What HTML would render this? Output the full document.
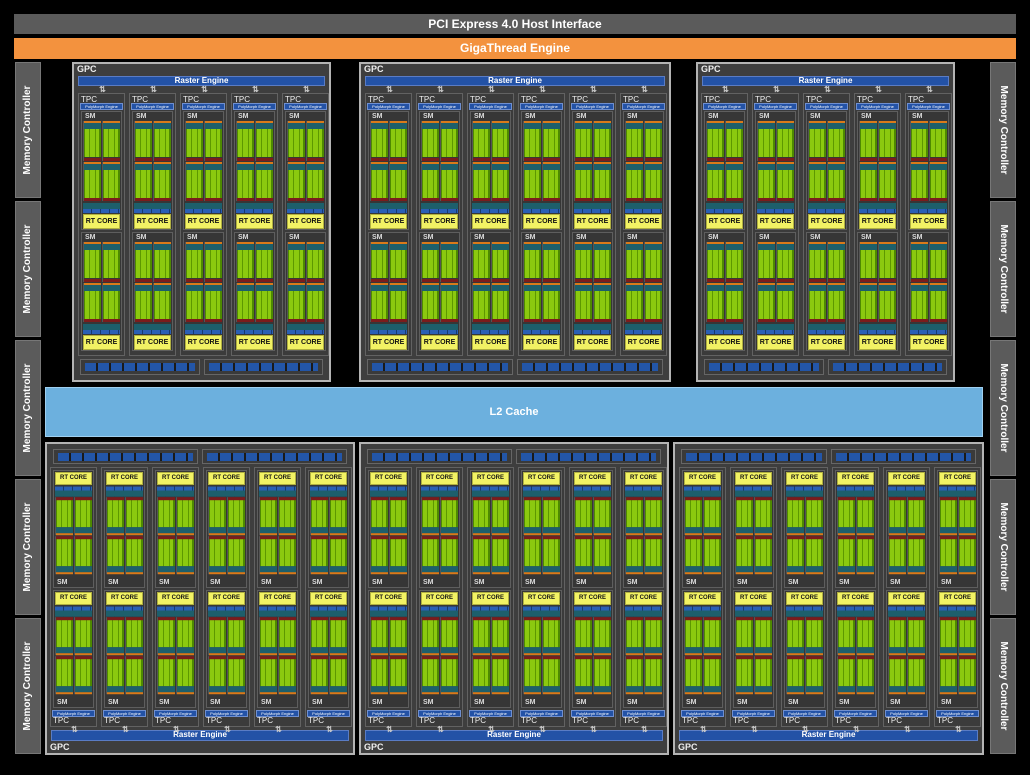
<!DOCTYPE html>
<html><head><meta charset="utf-8"><style>
*{box-sizing:border-box;margin:0;padding:0}
body{width:1030px;height:775px;background:#000;position:relative;overflow:hidden;font-family:"Liberation Sans",sans-serif;font-weight:bold;color:#fff}
.a{position:absolute}
#pci{left:14px;top:14px;width:1002px;height:20px;background:#5b5b5b;font-size:12px;text-align:center;line-height:20px}
#giga{left:14px;top:38px;width:1002px;height:21px;background:#f3923e;font-size:12px;text-align:center;line-height:21px}
.mc{width:26px;height:136px;background:#5b5b5b;border:1px solid #777}
.mc span{position:absolute;left:50%;top:50%;width:136px;text-align:center;font-size:10px;line-height:12px;transform:translate(-50%,-50%) rotate(-90deg);white-space:nowrap}
.mc.mr span{transform:translate(-50%,-50%) rotate(90deg)}
#l2{left:45px;top:387px;width:938px;height:50px;background:#6cb0de;border:1px solid #9fd0f0;font-size:11px;text-align:center;line-height:48px}
.g{position:absolute;border:2px solid #b4b4b4;background:#3e3e3e}
.g>h5{position:absolute;left:3px;font-size:9px;color:#eee;font-weight:bold}
.g .re{position:absolute;left:4px;right:4px;height:10px;background:#2352a6;border:1px solid #5a7cc4;font-size:8px;line-height:8px;text-align:center}
.g .bb{position:absolute;left:6px;right:6px;height:16px;display:flex;gap:4px}
.g .bb div{flex:1;border:1px solid #666;background:#3a3a3a;padding:3px 4px;background-clip:padding-box}
.g .bb div::after{content:"";display:block;height:8px;background:repeating-linear-gradient(90deg,#2356a8 0 11px,#1a1a1a 11px 13px)}
.t{position:absolute;width:47px;background:#3b3b3b;border:1px solid #626262}
.t p{position:absolute;left:2px;font-size:8px;font-weight:normal;color:#eee;line-height:8px}
.t s{position:absolute;left:1px;right:1px;height:7px;background:#2352a6;border:1px solid #6f8fd0;font-size:4px;line-height:5px;text-align:center;text-decoration:none;white-space:nowrap;overflow:hidden;font-weight:normal}
.t .ar{position:absolute;left:14px;width:18px;font-size:8px;line-height:6px;color:#ccc;text-align:center;letter-spacing:-1px}
.s{position:absolute;left:2px;width:41px;height:119px;background:#363636;border:1px solid #5e5e5e;display:flex;flex-direction:column;padding:0 1px}
.s b{height:9px;font-size:7px;line-height:9px;color:#ddd;padding-left:2px}
.r{display:flex;gap:1px;height:40px;margin-bottom:1px}
.r i{flex:1;background:
linear-gradient(#d97a1a,#d97a1a) 0 0/100% 2px no-repeat,
linear-gradient(#1d5f6b,#1d5f6b) 0 2px/100% 6px no-repeat,
linear-gradient(#7b1c1c,#7b1c1c) 0 100%/100% 3px no-repeat,
linear-gradient(90deg,#4e8a00 0 1px,#8bc90f 1px 5px,#5d9800 5px 6px,#8bc90f 6px 11px,#5d9800 11px 12px,#8bc90f 12px 15px,#4e8a00 15px) 0 8px/100% 28px no-repeat;border-left:1px solid #555}
.s em{display:block;height:10px;margin-top:1px;background:linear-gradient(#1d5f6b 0 6px,transparent 6px),repeating-linear-gradient(90deg,#2a5fb5 0 8px,#173a70 8px 9px)}
.s u{display:block;height:15px;margin-top:1px;background:#f2f264;border:1px solid #b0b040;color:#111;text-decoration:none;font-size:7px;line-height:13px;text-align:center;white-space:nowrap}
.tp .t{top:29px;height:263px}
.tp .t p{top:2px}.tp .t s{top:9px}
.tp .t .ar{top:-7px}
.tp .s1{top:17px}.tp .s2{top:138px}
.tp>h5{top:0}.tp .re{top:12px}.tp .bb{top:295px}
.bt .t{top:23px;height:260px}
.bt .t p{top:249px}.bt .t s{top:242px}
.bt .t .ar{bottom:-7px}
.bt .s1{top:2px}.bt .s2{top:122px}
.bt .s{flex-direction:column-reverse;height:118px}
.bt .s u{height:13px;font-size:6px;line-height:11px;margin:1px 0 2px}
.bt .r{transform:scaleY(-1);margin:0 0 1px}
.bt .s em{transform:scaleY(-1);margin:0}
.bt .s b{margin-top:3px}
.bt>h5{top:298px}.bt .re{top:286px;height:11px}.bt .bb{top:5px;height:15px}
</style></head><body>
<div id="pci" class="a">PCI Express 4.0 Host Interface</div>
<div id="giga" class="a">GigaThread Engine</div>

<div class="a mc" style="left:15px;top:62px"><span>Memory Controller</span></div>
<div class="a mc" style="left:15px;top:201px"><span>Memory Controller</span></div>
<div class="a mc" style="left:15px;top:340px"><span>Memory Controller</span></div>
<div class="a mc" style="left:15px;top:479px"><span>Memory Controller</span></div>
<div class="a mc" style="left:15px;top:618px"><span>Memory Controller</span></div>
<div class="a mc mr" style="left:990px;top:62px"><span>Memory Controller</span></div>
<div class="a mc mr" style="left:990px;top:201px"><span>Memory Controller</span></div>
<div class="a mc mr" style="left:990px;top:340px"><span>Memory Controller</span></div>
<div class="a mc mr" style="left:990px;top:479px"><span>Memory Controller</span></div>
<div class="a mc mr" style="left:990px;top:618px"><span>Memory Controller</span></div>

<div id="l2" class="a">L2 Cache</div>

<div class="g tp" style="left:72px;top:62px;width:259px;height:320px"><h5>GPC</h5><div class="re">Raster Engine</div>
<div class="t" style="left:4px"><span class="ar">⇅</span><p>TPC</p><s>PolyMorph Engine</s><div class="s s1"><b>SM</b><div class="r"><i></i><i></i></div><div class="r"><i></i><i></i></div><em></em><u>RT CORE</u></div><div class="s s2"><b>SM</b><div class="r"><i></i><i></i></div><div class="r"><i></i><i></i></div><em></em><u>RT CORE</u></div></div>
<div class="t" style="left:55px"><span class="ar">⇅</span><p>TPC</p><s>PolyMorph Engine</s><div class="s s1"><b>SM</b><div class="r"><i></i><i></i></div><div class="r"><i></i><i></i></div><em></em><u>RT CORE</u></div><div class="s s2"><b>SM</b><div class="r"><i></i><i></i></div><div class="r"><i></i><i></i></div><em></em><u>RT CORE</u></div></div>
<div class="t" style="left:106px"><span class="ar">⇅</span><p>TPC</p><s>PolyMorph Engine</s><div class="s s1"><b>SM</b><div class="r"><i></i><i></i></div><div class="r"><i></i><i></i></div><em></em><u>RT CORE</u></div><div class="s s2"><b>SM</b><div class="r"><i></i><i></i></div><div class="r"><i></i><i></i></div><em></em><u>RT CORE</u></div></div>
<div class="t" style="left:157px"><span class="ar">⇅</span><p>TPC</p><s>PolyMorph Engine</s><div class="s s1"><b>SM</b><div class="r"><i></i><i></i></div><div class="r"><i></i><i></i></div><em></em><u>RT CORE</u></div><div class="s s2"><b>SM</b><div class="r"><i></i><i></i></div><div class="r"><i></i><i></i></div><em></em><u>RT CORE</u></div></div>
<div class="t" style="left:208px"><span class="ar">⇅</span><p>TPC</p><s>PolyMorph Engine</s><div class="s s1"><b>SM</b><div class="r"><i></i><i></i></div><div class="r"><i></i><i></i></div><em></em><u>RT CORE</u></div><div class="s s2"><b>SM</b><div class="r"><i></i><i></i></div><div class="r"><i></i><i></i></div><em></em><u>RT CORE</u></div></div>
<div class="bb"><div></div><div></div></div></div>

<div class="g tp" style="left:359px;top:62px;width:312px;height:320px"><h5>GPC</h5><div class="re">Raster Engine</div>
<div class="t" style="left:4px"><span class="ar">⇅</span><p>TPC</p><s>PolyMorph Engine</s><div class="s s1"><b>SM</b><div class="r"><i></i><i></i></div><div class="r"><i></i><i></i></div><em></em><u>RT CORE</u></div><div class="s s2"><b>SM</b><div class="r"><i></i><i></i></div><div class="r"><i></i><i></i></div><em></em><u>RT CORE</u></div></div>
<div class="t" style="left:55px"><span class="ar">⇅</span><p>TPC</p><s>PolyMorph Engine</s><div class="s s1"><b>SM</b><div class="r"><i></i><i></i></div><div class="r"><i></i><i></i></div><em></em><u>RT CORE</u></div><div class="s s2"><b>SM</b><div class="r"><i></i><i></i></div><div class="r"><i></i><i></i></div><em></em><u>RT CORE</u></div></div>
<div class="t" style="left:106px"><span class="ar">⇅</span><p>TPC</p><s>PolyMorph Engine</s><div class="s s1"><b>SM</b><div class="r"><i></i><i></i></div><div class="r"><i></i><i></i></div><em></em><u>RT CORE</u></div><div class="s s2"><b>SM</b><div class="r"><i></i><i></i></div><div class="r"><i></i><i></i></div><em></em><u>RT CORE</u></div></div>
<div class="t" style="left:157px"><span class="ar">⇅</span><p>TPC</p><s>PolyMorph Engine</s><div class="s s1"><b>SM</b><div class="r"><i></i><i></i></div><div class="r"><i></i><i></i></div><em></em><u>RT CORE</u></div><div class="s s2"><b>SM</b><div class="r"><i></i><i></i></div><div class="r"><i></i><i></i></div><em></em><u>RT CORE</u></div></div>
<div class="t" style="left:208px"><span class="ar">⇅</span><p>TPC</p><s>PolyMorph Engine</s><div class="s s1"><b>SM</b><div class="r"><i></i><i></i></div><div class="r"><i></i><i></i></div><em></em><u>RT CORE</u></div><div class="s s2"><b>SM</b><div class="r"><i></i><i></i></div><div class="r"><i></i><i></i></div><em></em><u>RT CORE</u></div></div>
<div class="t" style="left:259px"><span class="ar">⇅</span><p>TPC</p><s>PolyMorph Engine</s><div class="s s1"><b>SM</b><div class="r"><i></i><i></i></div><div class="r"><i></i><i></i></div><em></em><u>RT CORE</u></div><div class="s s2"><b>SM</b><div class="r"><i></i><i></i></div><div class="r"><i></i><i></i></div><em></em><u>RT CORE</u></div></div>
<div class="bb"><div></div><div></div></div></div>

<div class="g tp" style="left:696px;top:62px;width:259px;height:320px"><h5>GPC</h5><div class="re">Raster Engine</div>
<div class="t" style="left:3px"><span class="ar">⇅</span><p>TPC</p><s>PolyMorph Engine</s><div class="s s1"><b>SM</b><div class="r"><i></i><i></i></div><div class="r"><i></i><i></i></div><em></em><u>RT CORE</u></div><div class="s s2"><b>SM</b><div class="r"><i></i><i></i></div><div class="r"><i></i><i></i></div><em></em><u>RT CORE</u></div></div>
<div class="t" style="left:54px"><span class="ar">⇅</span><p>TPC</p><s>PolyMorph Engine</s><div class="s s1"><b>SM</b><div class="r"><i></i><i></i></div><div class="r"><i></i><i></i></div><em></em><u>RT CORE</u></div><div class="s s2"><b>SM</b><div class="r"><i></i><i></i></div><div class="r"><i></i><i></i></div><em></em><u>RT CORE</u></div></div>
<div class="t" style="left:105px"><span class="ar">⇅</span><p>TPC</p><s>PolyMorph Engine</s><div class="s s1"><b>SM</b><div class="r"><i></i><i></i></div><div class="r"><i></i><i></i></div><em></em><u>RT CORE</u></div><div class="s s2"><b>SM</b><div class="r"><i></i><i></i></div><div class="r"><i></i><i></i></div><em></em><u>RT CORE</u></div></div>
<div class="t" style="left:156px"><span class="ar">⇅</span><p>TPC</p><s>PolyMorph Engine</s><div class="s s1"><b>SM</b><div class="r"><i></i><i></i></div><div class="r"><i></i><i></i></div><em></em><u>RT CORE</u></div><div class="s s2"><b>SM</b><div class="r"><i></i><i></i></div><div class="r"><i></i><i></i></div><em></em><u>RT CORE</u></div></div>
<div class="t" style="left:207px"><span class="ar">⇅</span><p>TPC</p><s>PolyMorph Engine</s><div class="s s1"><b>SM</b><div class="r"><i></i><i></i></div><div class="r"><i></i><i></i></div><em></em><u>RT CORE</u></div><div class="s s2"><b>SM</b><div class="r"><i></i><i></i></div><div class="r"><i></i><i></i></div><em></em><u>RT CORE</u></div></div>
<div class="bb"><div></div><div></div></div></div>

<div class="g bt" style="left:45px;top:442px;width:310px;height:313px"><h5>GPC</h5><div class="re">Raster Engine</div><div class="bb"><div></div><div></div></div>
<div class="t" style="left:3px"><span class="ar">⇅</span><p>TPC</p><s>PolyMorph Engine</s><div class="s s1"><b>SM</b><div class="r"><i></i><i></i></div><div class="r"><i></i><i></i></div><em></em><u>RT CORE</u></div><div class="s s2"><b>SM</b><div class="r"><i></i><i></i></div><div class="r"><i></i><i></i></div><em></em><u>RT CORE</u></div></div>
<div class="t" style="left:54px"><span class="ar">⇅</span><p>TPC</p><s>PolyMorph Engine</s><div class="s s1"><b>SM</b><div class="r"><i></i><i></i></div><div class="r"><i></i><i></i></div><em></em><u>RT CORE</u></div><div class="s s2"><b>SM</b><div class="r"><i></i><i></i></div><div class="r"><i></i><i></i></div><em></em><u>RT CORE</u></div></div>
<div class="t" style="left:105px"><span class="ar">⇅</span><p>TPC</p><s>PolyMorph Engine</s><div class="s s1"><b>SM</b><div class="r"><i></i><i></i></div><div class="r"><i></i><i></i></div><em></em><u>RT CORE</u></div><div class="s s2"><b>SM</b><div class="r"><i></i><i></i></div><div class="r"><i></i><i></i></div><em></em><u>RT CORE</u></div></div>
<div class="t" style="left:156px"><span class="ar">⇅</span><p>TPC</p><s>PolyMorph Engine</s><div class="s s1"><b>SM</b><div class="r"><i></i><i></i></div><div class="r"><i></i><i></i></div><em></em><u>RT CORE</u></div><div class="s s2"><b>SM</b><div class="r"><i></i><i></i></div><div class="r"><i></i><i></i></div><em></em><u>RT CORE</u></div></div>
<div class="t" style="left:207px"><span class="ar">⇅</span><p>TPC</p><s>PolyMorph Engine</s><div class="s s1"><b>SM</b><div class="r"><i></i><i></i></div><div class="r"><i></i><i></i></div><em></em><u>RT CORE</u></div><div class="s s2"><b>SM</b><div class="r"><i></i><i></i></div><div class="r"><i></i><i></i></div><em></em><u>RT CORE</u></div></div>
<div class="t" style="left:258px"><span class="ar">⇅</span><p>TPC</p><s>PolyMorph Engine</s><div class="s s1"><b>SM</b><div class="r"><i></i><i></i></div><div class="r"><i></i><i></i></div><em></em><u>RT CORE</u></div><div class="s s2"><b>SM</b><div class="r"><i></i><i></i></div><div class="r"><i></i><i></i></div><em></em><u>RT CORE</u></div></div>
</div>

<div class="g bt" style="left:359px;top:442px;width:310px;height:313px"><h5>GPC</h5><div class="re">Raster Engine</div><div class="bb"><div></div><div></div></div>
<div class="t" style="left:4px"><span class="ar">⇅</span><p>TPC</p><s>PolyMorph Engine</s><div class="s s1"><b>SM</b><div class="r"><i></i><i></i></div><div class="r"><i></i><i></i></div><em></em><u>RT CORE</u></div><div class="s s2"><b>SM</b><div class="r"><i></i><i></i></div><div class="r"><i></i><i></i></div><em></em><u>RT CORE</u></div></div>
<div class="t" style="left:55px"><span class="ar">⇅</span><p>TPC</p><s>PolyMorph Engine</s><div class="s s1"><b>SM</b><div class="r"><i></i><i></i></div><div class="r"><i></i><i></i></div><em></em><u>RT CORE</u></div><div class="s s2"><b>SM</b><div class="r"><i></i><i></i></div><div class="r"><i></i><i></i></div><em></em><u>RT CORE</u></div></div>
<div class="t" style="left:106px"><span class="ar">⇅</span><p>TPC</p><s>PolyMorph Engine</s><div class="s s1"><b>SM</b><div class="r"><i></i><i></i></div><div class="r"><i></i><i></i></div><em></em><u>RT CORE</u></div><div class="s s2"><b>SM</b><div class="r"><i></i><i></i></div><div class="r"><i></i><i></i></div><em></em><u>RT CORE</u></div></div>
<div class="t" style="left:157px"><span class="ar">⇅</span><p>TPC</p><s>PolyMorph Engine</s><div class="s s1"><b>SM</b><div class="r"><i></i><i></i></div><div class="r"><i></i><i></i></div><em></em><u>RT CORE</u></div><div class="s s2"><b>SM</b><div class="r"><i></i><i></i></div><div class="r"><i></i><i></i></div><em></em><u>RT CORE</u></div></div>
<div class="t" style="left:208px"><span class="ar">⇅</span><p>TPC</p><s>PolyMorph Engine</s><div class="s s1"><b>SM</b><div class="r"><i></i><i></i></div><div class="r"><i></i><i></i></div><em></em><u>RT CORE</u></div><div class="s s2"><b>SM</b><div class="r"><i></i><i></i></div><div class="r"><i></i><i></i></div><em></em><u>RT CORE</u></div></div>
<div class="t" style="left:259px"><span class="ar">⇅</span><p>TPC</p><s>PolyMorph Engine</s><div class="s s1"><b>SM</b><div class="r"><i></i><i></i></div><div class="r"><i></i><i></i></div><em></em><u>RT CORE</u></div><div class="s s2"><b>SM</b><div class="r"><i></i><i></i></div><div class="r"><i></i><i></i></div><em></em><u>RT CORE</u></div></div>
</div>

<div class="g bt" style="left:673px;top:442px;width:311px;height:313px"><h5>GPC</h5><div class="re">Raster Engine</div><div class="bb"><div></div><div></div></div>
<div class="t" style="left:4px"><span class="ar">⇅</span><p>TPC</p><s>PolyMorph Engine</s><div class="s s1"><b>SM</b><div class="r"><i></i><i></i></div><div class="r"><i></i><i></i></div><em></em><u>RT CORE</u></div><div class="s s2"><b>SM</b><div class="r"><i></i><i></i></div><div class="r"><i></i><i></i></div><em></em><u>RT CORE</u></div></div>
<div class="t" style="left:55px"><span class="ar">⇅</span><p>TPC</p><s>PolyMorph Engine</s><div class="s s1"><b>SM</b><div class="r"><i></i><i></i></div><div class="r"><i></i><i></i></div><em></em><u>RT CORE</u></div><div class="s s2"><b>SM</b><div class="r"><i></i><i></i></div><div class="r"><i></i><i></i></div><em></em><u>RT CORE</u></div></div>
<div class="t" style="left:106px"><span class="ar">⇅</span><p>TPC</p><s>PolyMorph Engine</s><div class="s s1"><b>SM</b><div class="r"><i></i><i></i></div><div class="r"><i></i><i></i></div><em></em><u>RT CORE</u></div><div class="s s2"><b>SM</b><div class="r"><i></i><i></i></div><div class="r"><i></i><i></i></div><em></em><u>RT CORE</u></div></div>
<div class="t" style="left:157px"><span class="ar">⇅</span><p>TPC</p><s>PolyMorph Engine</s><div class="s s1"><b>SM</b><div class="r"><i></i><i></i></div><div class="r"><i></i><i></i></div><em></em><u>RT CORE</u></div><div class="s s2"><b>SM</b><div class="r"><i></i><i></i></div><div class="r"><i></i><i></i></div><em></em><u>RT CORE</u></div></div>
<div class="t" style="left:208px"><span class="ar">⇅</span><p>TPC</p><s>PolyMorph Engine</s><div class="s s1"><b>SM</b><div class="r"><i></i><i></i></div><div class="r"><i></i><i></i></div><em></em><u>RT CORE</u></div><div class="s s2"><b>SM</b><div class="r"><i></i><i></i></div><div class="r"><i></i><i></i></div><em></em><u>RT CORE</u></div></div>
<div class="t" style="left:259px"><span class="ar">⇅</span><p>TPC</p><s>PolyMorph Engine</s><div class="s s1"><b>SM</b><div class="r"><i></i><i></i></div><div class="r"><i></i><i></i></div><em></em><u>RT CORE</u></div><div class="s s2"><b>SM</b><div class="r"><i></i><i></i></div><div class="r"><i></i><i></i></div><em></em><u>RT CORE</u></div></div>
</div>
</body></html>
